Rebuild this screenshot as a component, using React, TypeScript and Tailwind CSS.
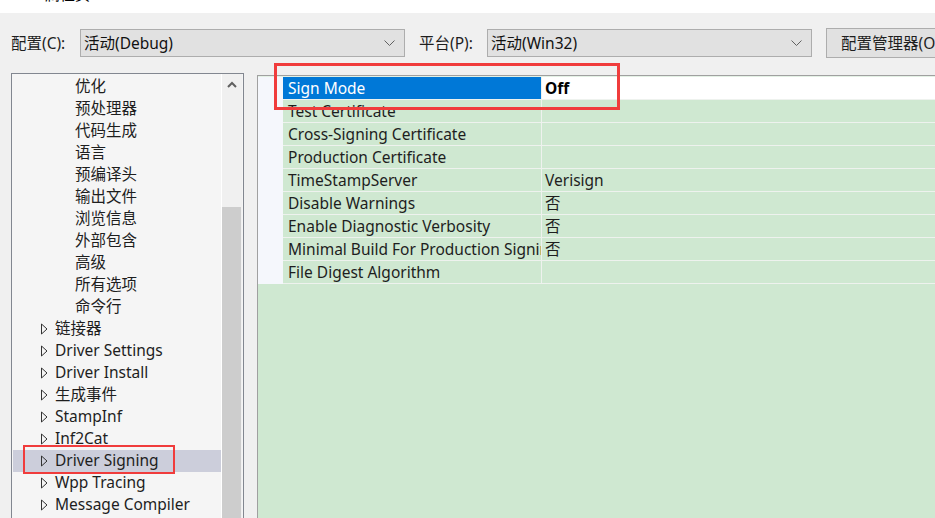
import React from 'react'

const font = { fontFamily: '"Noto Sans", "Noto Sans CJK SC", sans-serif' }

const treeItems: { label: string; level: number; selected?: boolean }[] = [
  { label: '优化', level: 1 },
  { label: '预处理器', level: 1 },
  { label: '代码生成', level: 1 },
  { label: '语言', level: 1 },
  { label: '预编译头', level: 1 },
  { label: '输出文件', level: 1 },
  { label: '浏览信息', level: 1 },
  { label: '外部包含', level: 1 },
  { label: '高级', level: 1 },
  { label: '所有选项', level: 1 },
  { label: '命令行', level: 1 },
  { label: '链接器', level: 0 },
  { label: 'Driver Settings', level: 0 },
  { label: 'Driver Install', level: 0 },
  { label: '生成事件', level: 0 },
  { label: 'StampInf', level: 0 },
  { label: 'Inf2Cat', level: 0 },
  { label: 'Driver Signing', level: 0, selected: true },
  { label: 'Wpp Tracing', level: 0 },
  { label: 'Message Compiler', level: 0 },
]

const props: { name: string; value: string; selected?: boolean }[] = [
  { name: 'Sign Mode', value: 'Off', selected: true },
  { name: 'Test Certificate', value: '' },
  { name: 'Cross-Signing Certificate', value: '' },
  { name: 'Production Certificate', value: '' },
  { name: 'TimeStampServer', value: 'Verisign' },
  { name: 'Disable Warnings', value: '否' },
  { name: 'Enable Diagnostic Verbosity', value: '否' },
  { name: 'Minimal Build For Production Signing', value: '否' },
  { name: 'File Digest Algorithm', value: '' },
]

function Chevron() {
  return (
    <svg width="11" height="6" viewBox="0 0 11 6" className="shrink-0">
      <path d="M0.5 0.5 L5.5 5.5 L10.5 0.5" fill="none" stroke="#606060" strokeWidth="1" />
    </svg>
  )
}

function Combo({ text }: { text: string }) {
  return (
    <div className="w-[325px] shrink-0 h-[28px] flex items-center justify-between pl-[3px] pr-[9px] border border-[#adadad] bg-[#e1e1e1] text-[#111]">
      <span className="pt-[1px]">{text}</span>
      <Chevron />
    </div>
  )
}

function Triangle() {
  return (
    <svg width="8" height="12" viewBox="0 0 8 12" className="shrink-0">
      <path d="M1.5 1 L7 6 L1.5 11 Z" fill="none" stroke="#333" strokeWidth="1" />
    </svg>
  )
}

export default function App() {
  return (
    <div
      className="relative w-[935px] h-[518px] overflow-hidden bg-[#f0f0f0] text-[#1e1e1e] text-[15.5px]"
      style={font}
    >
      {/* window title, cut off */}
      <div className="h-[13px] bg-white overflow-hidden">
        <div className="pl-[45px] -mt-[17px] text-[15px] leading-[22px] text-black">属性页</div>
      </div>

      {/* configuration row */}
      <div className="flex items-center h-[30px] mt-[15px]">
        <span className="ml-[11px] w-[69px] shrink-0 whitespace-nowrap pt-[1px]">配置(C):</span>
        <Combo text="活动(Debug)" />
        <span className="ml-[14px] w-[68px] shrink-0 whitespace-nowrap pt-[1px]">平台(P):</span>
        <Combo text="活动(Win32)" />
        <div className="ml-[14px] w-[130px] shrink-0 h-[30px] flex items-center pl-[14px] pt-[1px] border border-[#adadad] bg-[#e1e1e1] whitespace-nowrap">
          配置管理器(O)
        </div>
      </div>

      {/* main */}
      <div className="flex mt-[15px]">
        {/* tree */}
        <div className="ml-[11px] w-[233px] shrink-0 h-[460px] border border-[#828790] bg-[#f5f5f5] flex">
          <div className="w-[209px] pt-[2px]">
            {treeItems.map((it) => (
              <div
                key={it.label}
                className={`h-[22px] flex items-center ml-[1px] ${it.selected ? 'bg-[#cccedb]' : ''}`}
              >
                {it.level === 0 ? (
                  <div className="flex items-center pl-[27px] gap-[7px]">
                    <Triangle />
                    <span className="whitespace-nowrap">{it.label}</span>
                  </div>
                ) : (
                  <span className="pl-[62px] whitespace-nowrap">{it.label}</span>
                )}
              </div>
            ))}
          </div>
          <div className="w-[1px] bg-white" />
          <div className="w-[20px] flex flex-col bg-[#f0f0f0]">
            <div className="h-[20px] flex items-center justify-center">
              <svg width="10" height="7" viewBox="0 0 10 7">
                <path d="M1 6 L5 2 L9 6" fill="none" stroke="#606060" strokeWidth="2" />
              </svg>
            </div>
            <div className="mt-[113px] flex-1 w-[19px] bg-[#cdcdcd]" />
          </div>
        </div>

        {/* property grid */}
        <div className="ml-[13px] mt-[2px] flex-1 h-[460px] border-l border-t border-[#a0a0a0] bg-[#cfe8d1] flex flex-col">
          <div className="h-[1px] bg-[#e4f1e5]" />
          <div className="flex">
            <div className="w-[25px] bg-[#f5f7fc]" />
            <div className="flex-1">
              {props.map((p) => (
                <div key={p.name} className="flex h-[23px] border-b border-[#eef2ee]">
                  <div
                    className={`w-[258px] pl-[5px] pt-[2px] flex items-center overflow-hidden whitespace-nowrap ${
                      p.selected ? 'bg-[#0078d7] text-white' : ''
                    }`}
                  >
                    {p.name}
                  </div>
                  <div className="w-[1px] bg-[#eef2ee]" />
                  <div
                    className={`flex-1 pl-[3px] pt-[2px] flex items-center ${p.selected ? 'bg-white font-bold text-black' : ''}`}
                  >
                    {p.value}
                  </div>
                </div>
              ))}
            </div>
          </div>
        </div>
      </div>

      {/* red annotation boxes */}
      <div className="absolute left-[274px] top-[63px] w-[346px] h-[47px] border-[3px] border-[#f03c3c]" />
      <div className="absolute left-[23px] top-[445px] w-[152px] h-[29px] border-[2px] border-[#f03c3c]" />
    </div>
  )
}
